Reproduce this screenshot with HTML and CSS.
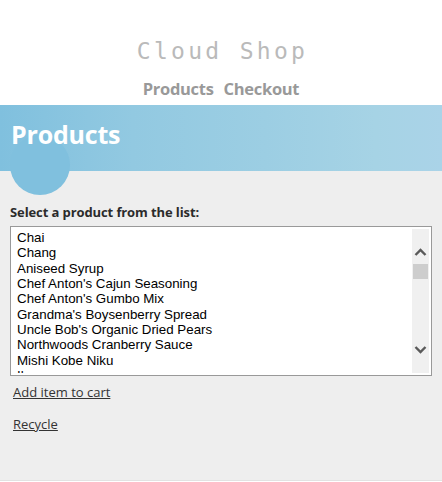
FILE: index.html
```html
<!DOCTYPE html>
<html>
<head>
<meta charset="utf-8">
<title>Cloud Shop</title>
<link rel="stylesheet" href="styles.css">
</head>
<body>
<header class="site-header">
  <div class="logo">Cloud Shop</div>
  <nav class="nav">
    <a href="#" class="nav-link">Products</a>
    <a href="#" class="nav-link">Checkout</a>
  </nav>
</header>
<section class="band">
  <h1 class="band-title">Products</h1>
</section>
<main class="content">
  <label class="list-label">Select a product from the list:</label>
  <div class="listbox">
    <ul class="options">
      <li>Chai</li>
      <li>Chang</li>
      <li>Aniseed Syrup</li>
      <li>Chef Anton's Cajun Seasoning</li>
      <li>Chef Anton's Gumbo Mix</li>
      <li>Grandma's Boysenberry Spread</li>
      <li>Uncle Bob's Organic Dried Pears</li>
      <li>Northwoods Cranberry Sauce</li>
      <li>Mishi Kobe Niku</li>
      <li>Ikura</li>
    </ul>
    <div class="scrollbar">
      <svg class="arrow" width="17" height="17" viewBox="0 0 17 17"><path d="M3.5 11 L8.5 6 L13.5 11" fill="none" stroke="#5a5a5a" stroke-width="2.4"/></svg>
      <div class="thumb"></div>
      <div class="track"></div>
      <svg class="arrow" width="17" height="17" viewBox="0 0 17 17"><path d="M3.5 6 L8.5 11 L13.5 6" fill="none" stroke="#5a5a5a" stroke-width="2.4"/></svg>
    </div>
  </div>
  <div class="actions">
    <a href="#" class="action">Add item to cart</a>
    <a href="#" class="action">Recycle</a>
  </div>
</main>
</body>
</html>
```
FILE: styles.css
```css
html, body {
  margin: 0;
  padding: 0;
}
*, *::before, *::after {
  box-sizing: border-box;
}
body {
  background: #ffffff;
  font-family: "Open Sans", "Noto Sans", sans-serif;
}
.site-header {
  height: 105px;
  display: flex;
  flex-direction: column;
  align-items: center;
}
.logo {
  margin-top: 36px;
  font-family: "DejaVu Sans Mono", monospace;
  font-size: 23px;
  letter-spacing: 3.3px;
  color: #bababa;
  line-height: 30px;
  padding-left: 3px;
}
.nav {
  margin-top: 12px;
  display: flex;
  gap: 10px;
}
.nav-link {
  color: #999999;
  font-weight: bold;
  font-size: 16.5px;
  text-decoration: none;
  line-height: 22px;
  letter-spacing: -0.3px;
}
.band {
  position: relative;
  height: 66px;
  background: linear-gradient(to right, #80c0de 0%, #92c9e1 30%, #9ccee3 60%, #a6d3e5 85%, #aad3e8 100%);
}
.band::after {
  content: "";
  position: absolute;
  left: 10px;
  top: 30px;
  width: 60px;
  height: 60px;
  border-radius: 50%;
  background: #80c0de;
}
.band-title {
  margin: 0;
  padding: 12px 0 0 11px;
  color: #ffffff;
  font-size: 25px;
  font-weight: bold;
  line-height: 34px;
  letter-spacing: -0.2px;
  position: relative;
  z-index: 1;
}
.content {
  background: #eeeeee;
  height: 310px;
  padding: 33px 10px 0 10px;
  border-bottom: 1px solid #e2e2e2;
}
.list-label {
  display: block;
  font-size: 13px;
  font-weight: bold;
  color: #2b2b2b;
  line-height: 16px;
  letter-spacing: -0.1px;
}
.listbox {
  margin-top: 6px;
  width: 422px;
  height: 150px;
  border: 1px solid #999999;
  background: #ffffff;
  padding: 2px;
  display: flex;
  overflow: hidden;
}
.options {
  list-style: none;
  margin: 0;
  padding: 1px 0 0 4px;
  flex: 1;
  overflow: hidden;
  font-family: "Liberation Sans", Arial, sans-serif;
  font-size: 13.33px;
  line-height: 15.33px;
  color: #000000;
}
.options li {
  white-space: nowrap;
}
.scrollbar {
  width: 17px;
  background: #f0f0f0;
  display: flex;
  flex-direction: column;
  align-items: center;
}
.arrow {
  display: block;
  flex: none;
}
.arrow:first-child {
  margin-top: 15px;
}
.arrow:last-child {
  margin-bottom: 15px;
}
.thumb {
  width: 15px;
  height: 15px;
  background: #cdcdcd;
  margin-top: 3px;
}
.track {
  flex: 1;
}
.actions {
  display: flex;
  flex-direction: column;
  align-items: flex-start;
  gap: 12px;
  margin-top: 6px;
  padding-left: 3px;
}
.action {
  color: #333333;
  font-size: 13px;
  line-height: 20px;
  text-decoration: underline;
}
```
